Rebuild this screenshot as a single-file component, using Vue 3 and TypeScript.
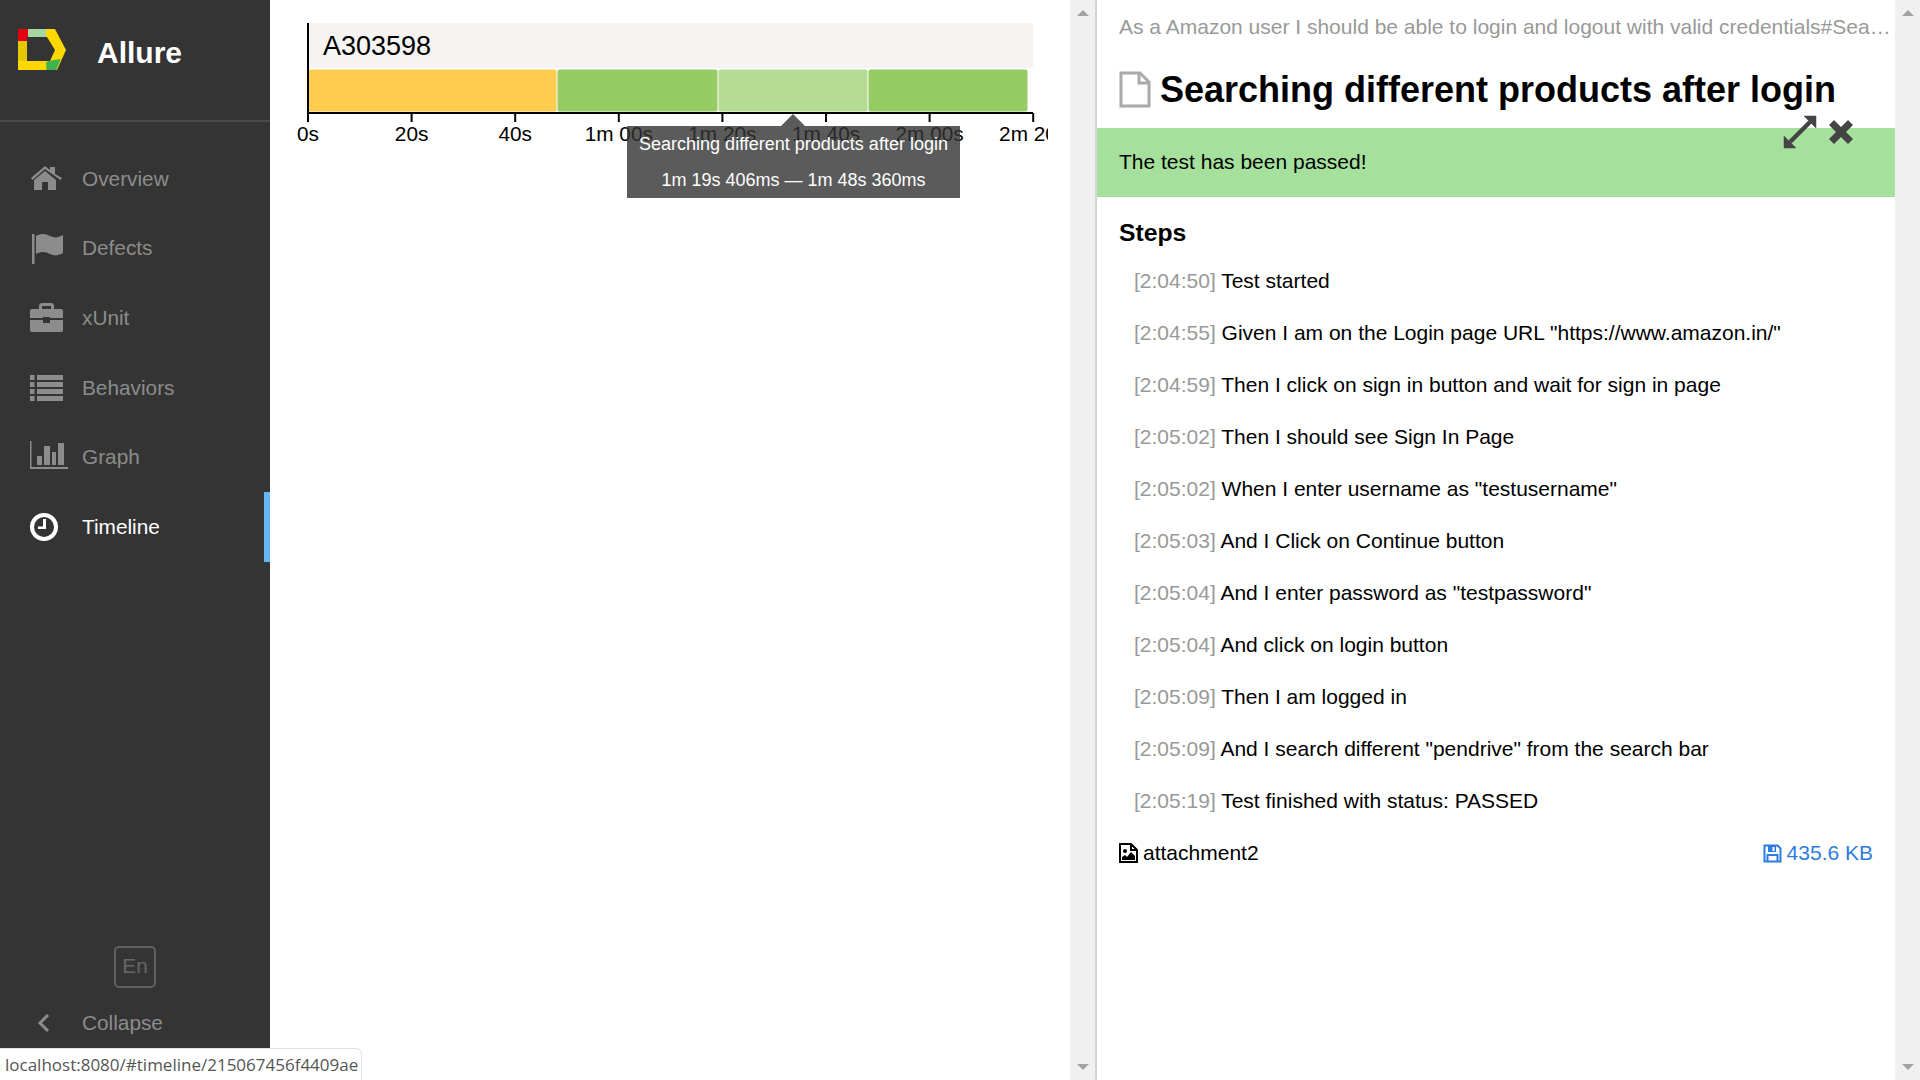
<template>
  <div class="app">
    <aside class="side">
      <div class="side__brand">
        <svg class="side__logo" width="50" height="44" viewBox="0 0 50 44">
          <path d="M0 0h37l11 21-9 20H0z" fill="#ffd800" />
          <path d="M0 12h9v20H0z" fill="#e6c800" />
          <path d="M0 0h10v12H0z" fill="#e3000f" />
          <path d="M10 0h18v8H10z" fill="#a6d6a2" />
          <path d="M28.300 41h10l4.500-11-11 1.700-3.500 1.300z" fill="#3fb34f" />
          <path d="M9 8h20l8 13-5 11H9z" fill="#343434" />
        </svg>
        <span class="side__name">Allure</span>
      </div>
      <nav class="side__nav">
        <a v-for="item in navItems" :key="item.label" class="nav" :class="{ 'nav--on': item.active }">
          <span class="nav__icon">
            <svg width="40" height="34" viewBox="0 0 40 34" fill="currentColor">
              <path v-for="(d, i) in item.paths" :key="i" :d="d" />
            </svg>
          </span>
          <span>{{ item.label }}</span>
        </a>
      </nav>
      <div class="side__foot">
        <button class="lang">En</button>
        <div class="collapse">
          <svg class="collapse__icon" width="14" height="20" viewBox="0 0 14 20">
            <path d="M11 2L3 10l8 8" fill="none" stroke="currentColor" stroke-width="3" />
          </svg>
          <span>Collapse</span>
        </div>
      </div>
    </aside>

    <main class="chart">
      <svg class="chart__svg" width="778" height="160">
        <rect x="39" y="23" width="724" height="45" fill="#f5f4f2" />
        <text x="53" y="55" class="chart__host">A303598</text>
        <rect
          v-for="bar in bars"
          :key="bar.x"
          :x="bar.x"
          y="69.5"
          :width="bar.w"
          height="42"
          rx="2"
          :fill="bar.color"
        />
        <path d="M38 23v91M37 113h726" stroke="#000" stroke-width="2" fill="none" />
        <g v-for="tick in ticks" :key="tick.label">
          <line :x1="tick.x" :x2="tick.x" y1="113" y2="122" stroke="#000" stroke-width="2" />
          <text :x="tick.x" y="141" text-anchor="middle" class="chart__tick">{{ tick.label }}</text>
        </g>
      </svg>
      <div class="tip">
        <div>Searching different products after login</div>
        <div>1m 19s 406ms — 1m 48s 360ms</div>
      </div>
    </main>

    <div class="scroll">
      <i class="scroll__up" />
      <i class="scroll__down" />
    </div>
    <div class="divider" />

    <section class="pane">
      <div class="pane__crumb">As a Amazon user I should be able to login and logout with valid credentials#Searching different products after login</div>
      <h1 class="pane__title">
        <svg width="32" height="37" viewBox="0 0 32 37">
          <path d="M2 2h19l9 9v24H2z" fill="#fff" stroke="#aaa" stroke-width="3" />
          <path d="M20 2v10h10" fill="none" stroke="#aaa" stroke-width="3" />
        </svg>
        <span>Searching different products after login</span>
      </h1>
      <div class="pane__status">The test has been passed!</div>
      <div class="pane__actions">
        <svg width="34" height="34" viewBox="0 0 34 34" fill="#444">
          <path d="M21 1h12v12zM13 33H1V21z" stroke="#444" stroke-width="0.500" />
          <path d="M7 27L27 7" stroke="#444" stroke-width="4.500" />
        </svg>
        <svg width="26" height="26" viewBox="0 0 26 26" fill="#444">
          <path d="M6 1l7 7 7-7 5 5-7 7 7 7-5 5-7-7-7 7-5-5 7-7-7-7z" />
        </svg>
      </div>
      <h2 class="pane__steps">Steps</h2>
      <div v-for="step in steps" :key="step.time + step.text" class="step">
        <span class="step__time">[{{ step.time }}]</span> {{ step.text }}
      </div>
      <div class="attach">
        <svg width="19" height="20" viewBox="0 0 19 20">
          <path d="M1 1h11l6 6v12H1z" fill="#fff" stroke="#000" stroke-width="2" />
          <path d="M12 1v6h6" fill="none" stroke="#000" stroke-width="2" />
          <circle cx="6" cy="8" r="2" fill="#000" />
          <path d="M3 17v-3l3-2 2 2 4-5 4 4v4z" fill="#000" />
        </svg>
        <span class="attach__name">attachment2</span>
        <span class="attach__size">
          <svg width="19" height="19" viewBox="0 0 19 19">
            <path d="M1.500 1.500h13l3 3v13h-16z" fill="none" stroke="currentColor" stroke-width="2" />
            <path d="M5 2h8v6H5z" fill="currentColor" />
            <path d="M9.500 3h2v4h-2z" fill="#fff" />
            <path d="M4.500 17v-6h10v6" fill="none" stroke="currentColor" stroke-width="2" />
          </svg>
          435.6 KB
        </span>
      </div>
    </section>

    <div class="scroll">
      <i class="scroll__up" />
      <i class="scroll__down" />
    </div>

    <div class="status">localhost:8080/#timeline/215067456f4409ae</div>
  </div>
</template>

<script setup lang="ts">
interface NavItem {
  label: string
  paths: string[]
  active?: boolean
}

const navItems: NavItem[] = [
  {
    label: 'Overview',
    paths: [
      'M2 16L16 4l5 4V5h5v7l7 4-1.500 2L16 7 3.500 18z',
      'M5 18L16 9l11 9v10H19v-8h-6v8H5z',
    ],
  },
  {
    label: 'Defects',
    paths: [
      'M3 3h2.500v30H3z',
      'M7 5c6-3 10-2 14 0s8 2 13-1v18c-5 3-9 3-13 1s-8-3-14 0z',
    ],
  },
  {
    label: 'xUnit',
    paths: [
      'M13 2h9a3 3 0 0 1 3 3v3h-3V5h-9v3h-3V5a3 3 0 0 1 3-3z',
      'M3 8h29a2 2 0 0 1 2 2v7H21v-1h-7v1H1v-7a2 2 0 0 1 2-2z',
      'M1 19h13v3h7v-3h13v10a2 2 0 0 1-2 2H3a2 2 0 0 1-2-2z',
    ],
  },
  {
    label: 'Behaviors',
    paths: [
      'M1 4h4.500v5H1zM8 4h26v5H8z',
      'M1 11h4.500v5H1zM8 11h26v5H8z',
      'M1 18h4.500v5H1zM8 18h26v5H8z',
      'M1 25h4.500v5H1zM8 25h26v5H8z',
    ],
  },
  {
    label: 'Graph',
    paths: [
      'M1 1h1.500v26H39v2H1z',
      'M8 16h5v9H8zM15 6h6v19h-6zM23 12h4v13h-4zM29 3h6v22h-6z',
    ],
  },
  {
    label: 'Timeline',
    active: true,
    paths: [
      'M15 3a14 14 0 1 1 0 28 14 14 0 0 1 0-28zm0 4a10 10 0 1 0 0 20 10 10 0 0 0 0-20z',
      'M14 9h3v10H9v-2.500h5z',
    ],
  },
]

const bars = [
  { x: 38.5, w: 248, color: '#fecc4e' },
  { x: 287.5, w: 160, color: '#97cc64' },
  { x: 448.5, w: 149, color: '#b6dc93' },
  { x: 598.5, w: 159, color: '#97cc64' },
]

const tickLabels = ['0s', '20s', '40s', '1m 00s', '1m 20s', '1m 40s', '2m 00s', '2m 20s']
const ticks = tickLabels.map((label, i) => ({ label, x: 38 + i * 103.6 }))

const steps = [
  { time: '2:04:50', text: 'Test started' },
  { time: '2:04:55', text: 'Given I am on the Login page URL "https://www.amazon.in/"' },
  { time: '2:04:59', text: 'Then I click on sign in button and wait for sign in page' },
  { time: '2:05:02', text: 'Then I should see Sign In Page' },
  { time: '2:05:02', text: 'When I enter username as "testusername"' },
  { time: '2:05:03', text: 'And I Click on Continue button' },
  { time: '2:05:04', text: 'And I enter password as "testpassword"' },
  { time: '2:05:04', text: 'And click on login button' },
  { time: '2:05:09', text: 'Then I am logged in' },
  { time: '2:05:09', text: 'And I search different "pendrive" from the search bar' },
  { time: '2:05:19', text: 'Test finished with status: PASSED' },
]
</script>

<style>
html,
body {
  margin: 0;
  height: 100%;
  overflow: hidden;
}
</style>

<style scoped>
.app {
  display: flex;
  position: relative;
  height: 1080px;
  font-family: "Liberation Sans", Arial, sans-serif;
  font-size: 20.8px;
  color: #000;
  background: #fff;
}

.side {
  display: flex;
  flex-direction: column;
  flex: none;
  width: 270px;
  background: #343434;
  color: #8c8c8c;
}

.side__brand {
  display: flex;
  align-items: center;
  height: 122px;
  padding: 0 0 18px 18px;
  box-sizing: border-box;
  border-bottom: 2px solid #4a4a4a;
  color: #fff;
}

.side__logo {
  flex: none;
}

.side__name {
  margin: 3px 0 0 29px;
  font-size: 30px;
  font-weight: 700;
}

.side__nav {
  margin-top: 22px;
}

.nav {
  display: flex;
  align-items: center;
  position: relative;
  height: 69.6px;
}

.nav--on {
  color: #fff;
}

.nav--on::after {
  content: "";
  position: absolute;
  top: 0;
  right: 0;
  bottom: 0;
  width: 6px;
  background: #64b5f6;
}

.nav__icon {
  display: flex;
  width: 82px;
  padding-left: 29px;
  box-sizing: border-box;
}

.side__foot {
  margin-top: auto;
}

.lang {
  display: block;
  width: 42px;
  height: 42px;
  margin: 0 auto 14px 114px;
  padding: 0 0 2px;
  border: 2px solid #5f5f5f;
  border-radius: 5px;
  background: none;
  color: #666;
  font: inherit;
}

.collapse {
  display: flex;
  align-items: center;
  height: 42px;
  margin-bottom: 36px;
}

.collapse__icon {
  margin: 0 31px 0 37px;
}

.chart {
  position: relative;
  flex: 1;
  min-width: 0;
}

.chart__svg {
  display: block;
}

.chart__host {
  font-size: 27px;
}

.chart__tick {
  font-size: 20.8px;
}

.tip {
  position: absolute;
  top: 126px;
  left: 357px;
  width: 333px;
  height: 72px;
  background: rgba(50, 50, 50, 0.8);
  color: #fff;
  font-size: 18px;
  line-height: 36px;
  text-align: center;
}

.tip::before {
  content: "";
  position: absolute;
  top: -12px;
  left: 154px;
  border: 12px solid transparent;
  border-top: 0;
  border-bottom-color: rgba(50, 50, 50, 0.8);
}

.scroll {
  display: flex;
  flex: none;
  flex-direction: column;
  justify-content: space-between;
  align-items: center;
  width: 25px;
  padding: 10px 0;
  box-sizing: border-box;
  background: #f0f0f0;
}

.scroll__up,
.scroll__down {
  border: 6px solid transparent;
  border-top: 0;
  border-bottom-color: #a3a3a3;
}

.scroll__down {
  border: 6px solid transparent;
  border-bottom: 0;
  border-top-color: #a3a3a3;
}

.divider {
  flex: none;
  width: 2px;
  background: #d4d5d7;
}

.pane {
  position: relative;
  flex: none;
  width: 798px;
  font-size: 21px;
}

.pane__crumb {
  padding: 12px 0 0 22px;
  line-height: 30px;
  color: #999;
  white-space: nowrap;
  overflow: hidden;
  text-overflow: ellipsis;
}

.pane__title {
  display: flex;
  align-items: center;
  gap: 9px;
  height: 86px;
  margin: 0;
  padding: 9px 0 0 22px;
  box-sizing: border-box;
  font-size: 36px;
  font-weight: 700;
}

.pane__status {
  padding: 0 22px 2px;
  line-height: 67px;
  background: #a5e09c;
}

.pane__actions {
  position: absolute;
  top: 115px;
  left: 686px;
  display: flex;
  align-items: center;
  gap: 11px;
}

.pane__steps {
  margin: 20px 0 7px;
  padding-left: 22px;
  font-size: 24.7px;
  font-weight: 700;
  line-height: 31px;
}

.step {
  padding-left: 37px;
  line-height: 52px;
  white-space: nowrap;
}

.step__time {
  color: #999;
}

.attach {
  display: flex;
  align-items: center;
  height: 52px;
  padding: 0 22px;
}

.attach__name {
  margin-left: 5px;
}

.attach__size {
  display: flex;
  align-items: center;
  gap: 5px;
  margin-left: auto;
  color: #2d7de0;
}

.status {
  position: absolute;
  left: 0;
  bottom: 0;
  width: 362px;
  height: 32px;
  padding-left: 5px;
  box-sizing: border-box;
  border: 1px solid #e1e1e1;
  border-width: 1px 1px 0 0;
  border-top-right-radius: 6px;
  background: #fff;
  color: #555;
  font-family: "Open Sans", sans-serif;
  font-size: 17px;
  line-height: 31px;
  white-space: nowrap;
}
</style>
